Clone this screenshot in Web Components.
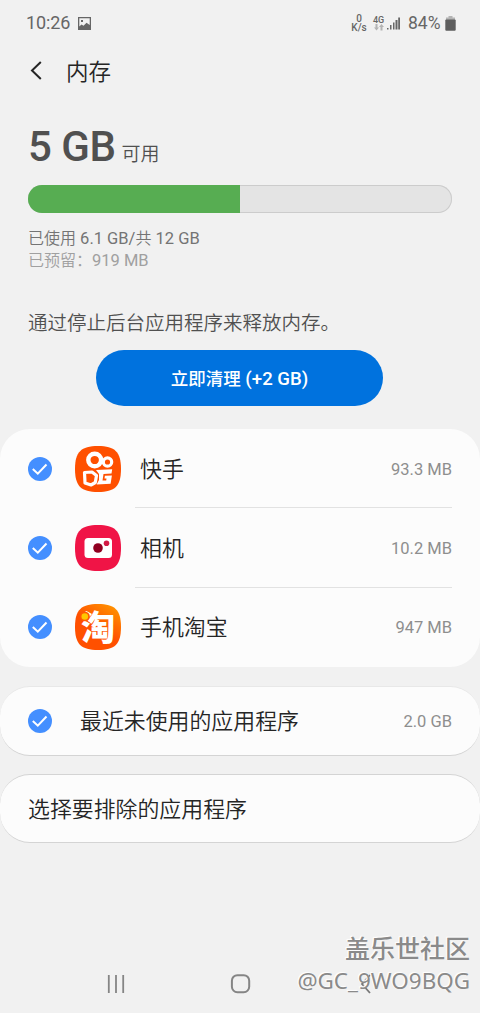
<!DOCTYPE html>
<html lang="zh-CN">
<head>
<meta charset="utf-8">
<meta name="viewport" content="width=device-width">
<title>内存</title>
<style>
html,body{margin:0;height:100%;background:#f1f1f1}
body{font-family:Roboto,"Noto Sans CJK SC",sans-serif;color:#252525;overflow:hidden}
</style>
</head>
<body>
<memory-screen></memory-screen>
<script>
const define = (name, html) => {
  const t = document.createElement('template');
  t.innerHTML = html;
  customElements.define(name, class extends HTMLElement {
    constructor(){ super(); this.attachShadow({mode:'open'}).append(t.content.cloneNode(true)); }
  });
};

define('status-bar', `<style>
:host{display:flex;height:46px;box-sizing:border-box;padding:0 24px 0 26px;align-items:center;color:#666;font-size:18px;line-height:20px}
.time{letter-spacing:-.1px}
.pic{margin-left:8px}
.speed{margin-left:auto;width:16px;font-size:10px;line-height:9px;font-weight:500;text-align:center;white-space:nowrap}
.net{margin-left:6px;margin-right:1px;width:12px;font-size:9px;line-height:8px;font-weight:500}
.net svg{display:block;margin-left:1px}
.sig{margin:1px 8px 0 1px}
.pct{width:32px;white-space:nowrap;font-size:17.5px}
.bat{margin-left:5px}
svg{display:block;flex:none}
</style>
<span class="time">10:26</span>
<svg class="pic" width="13" height="13" viewBox="0 0 13 13"><path fill="#666" fill-rule="evenodd" d="M0 0h13v13H0zM1.300 1.300v8.200L3.500 7.500l2 1.200 3-3 3.200 2.300V1.300zM3 3h2v2H3z"/></svg>
<div class="speed">0<br>K/s</div>
<div class="net">4G<svg width="10" height="7" viewBox="0 0 10 7"><path fill="#b4b4b4" d="M1.500 0h2v3.500H5L2.500 6.500 0 3.500h1.500zM6.500 6.500h2V3H10L7.500 0 5 3h1.500z"/></svg></div>
<svg class="sig" width="13" height="13" viewBox="0 0 13 13"><path fill="#666" d="M0 11h1.500v1.500H0zM3 8h1.500v4.500H3zM6 5.500h1.500v7H6zM8.500 3h2v9.500h-2zM11.200 0.500H13v12h-1.800z"/></svg>
<span class="pct">84%</span>
<svg class="bat" width="11" height="15" viewBox="0 0 11 15"><path fill="#b4b4b4" d="M3.500 0h4v1.500H10V4H1V1.500h2.500z"/><rect y="3.500" x=".3" width="10.400" height="11.200" rx="1" fill="#5e5e5e"/></svg>`);

define('title-bar', `<style>
:host{display:flex;height:52px;padding-left:30px;align-items:center}
svg{display:block;margin-top:-3px}
h1{margin:0 0 0 24px;font-weight:350;font-size:22.500px;line-height:30px}
</style>
<svg width="12" height="19" viewBox="0 0 12 19"><path d="M10.800 1 2 9.500l8.800 8.500" fill="none" stroke="#252525" stroke-width="2"/></svg>
<h1><slot></slot></h1>`);

define('memory-summary', `<style>
:host{display:flex;flex-direction:column;height:204px;padding:23px 28px 0;box-sizing:border-box}
.big{display:flex;align-items:baseline;height:64px;line-height:52px;color:#505050}
b{font-size:42px;font-weight:500;letter-spacing:-.5px}
.big span{font-size:19px;font-weight:350;margin-left:6px}
.bar{display:flex;height:28px;box-sizing:border-box;border-radius:14px;background:#e4e4e4;box-shadow:inset 0 0 0 1px #ccc;overflow:hidden}
.bar i{width:50%;background:#57ad52}
p{margin:0;font-size:16px;line-height:22px;color:#747474;white-space:nowrap}
p span{font-size:16.500px}
em{font-style:normal;font-weight:350}
.used{margin-top:15px}
.kept{color:#a0a0a0}
</style>
<div class="big"><b>5 GB</b><span>可用</span></div>
<div class="bar"><i></i></div>
<p class="used"><em>已使用</em><span> 6.1 GB/</span><em>共</em><span> 12 GB</span></p>
<p class="kept"><em>已预留：</em><span>919 MB</span></p>`);

define('clean-panel', `<style>
:host{display:flex;flex-direction:column;height:127px;padding-top:8px;box-sizing:border-box}
p{margin:0 28px;font-size:19.500px;font-weight:350;line-height:28px;color:#505050;white-space:nowrap}
button{display:block;margin:12px 0 0 96px;width:287px;height:56px;border:0;border-radius:28px;background:#0072de;color:#fff;font:500 17.500px/24px Roboto,"Noto Sans CJK SC",sans-serif;padding:1px 0 0}
button span{font-size:18.600px}
</style>
<p>通过停止后台应用程序来释放内存。</p>
<button>立即清理<span> (+2 GB)</span></button>`);

define('round-card', `<style>
:host{display:block;box-sizing:border-box;background:#fcfcfc;border-radius:30px;padding:0 28px}
:host([edge]){border-top:1px solid #e8e8e8;border-bottom:1px solid #d4d4d4}
:host([edge=both]){border-top-color:#d4d4d4}
</style><slot></slot>`);

define('check-mark', `<style>:host{display:block;width:24px;height:24px;flex:none}svg{display:block}</style>
<svg width="24" height="24" viewBox="0 0 24 24"><circle cx="12" cy="12" r="12" fill="#448fff"/><path d="m4.800 12 5 4.700 8.700-9.200" fill="none" stroke="#fff" stroke-width="2"/></svg>`);

define('app-row', `<style>
:host{display:flex;height:79.300px;align-items:center}
slot[name=icon]{display:block}
.main{display:flex;flex:1;align-self:stretch;align-items:center;justify-content:space-between;margin-left:13px;padding:3px 0 0 5px;box-sizing:border-box;border-bottom:1px solid #e2e2e2}
:host([last]) .main{border-color:transparent}
.icon{margin-left:22px;width:48px;height:48px}
:host([plain]){height:100%}
:host([plain]) .icon{display:none}
:host([plain]) .main{margin-left:23px;padding-top:1px;border:0}
.name{font-size:21.900px;font-weight:350;line-height:30px;color:#252525}
.size{font-size:16.500px;line-height:22px;color:#8e8e8e}
</style>
<check-mark></check-mark><div class="icon"><slot name="icon"></slot></div>
<div class="main"><span class="name"><slot></slot></span><span class="size"><slot name="size"></slot></span></div>`);

const squircle = 'M24 1C41 1 47 7 47 24S41 47 24 47 1 41 1 24 7 1 24 1Z';
define('video-icon', `<style>:host,svg{display:block}</style>
<svg width="48" height="48" viewBox="0 0 48 48"><path d="${squircle}" fill="#ff5000"/>
<g fill="none" stroke="#fff"><ellipse cx="20.700" cy="15" rx="6.400" ry="6.300" stroke-width="4.400"/><ellipse cx="33.500" cy="17" rx="4.200" ry="4.200" stroke-width="3.200"/>
<path d="M10.500 27.500 18 27l4.500 3.500-1.200 7L17 40l-6-2Z" stroke-width="3.200" stroke-linejoin="round"/></g>
<path fill="#fff" d="m22 25 16.200-.8-.7 4.300-8 .5-1 6.500h3.700l.3-2h-2l.4-2.800 7-.3-1.300 8.400-14 .7 2.400-4.500v-6Z"/></svg>`);

define('camera-icon', `<style>:host,svg{display:block}</style>
<svg width="48" height="48" viewBox="0 0 48 48"><path d="${squircle}" fill="#f01446"/><rect x="10.500" y="14" width="27.500" height="20" rx="3.500" fill="#fff"/><circle cx="24" cy="24" r="4.800" fill="#900020"/><circle cx="32.500" cy="19.300" r="2.800" fill="#d21b45"/></svg>`);

define('taobao-icon', `<style>:host{display:grid;width:48px;height:48px;place-items:center}svg,span{grid-area:1/1}svg{display:block}
span{font:900 34px/46px "Noto Sans CJK SC",sans-serif;color:#fff;height:48px}.dot{z-index:1}</style>
<svg width="48" height="48" viewBox="0 0 48 48"><defs><linearGradient id="g" x1=".85" y1="0" x2=".3" y2=".8"><stop stop-color="#ff9600"/><stop offset=".65" stop-color="#ff5000"/></linearGradient></defs><path d="${squircle}" fill="url(#g)"/></svg>
<span>淘</span>
<svg class="dot" width="48" height="48" viewBox="0 0 48 48"><circle cx="11" cy="13.500" r="4.800" fill="#ff5c00"/><circle cx="10.800" cy="13.500" r="3.300" fill="#ffc800"/></svg>`);

define('nav-bar', `<style>
:host{display:flex;height:58px;align-items:center;padding-left:107px;box-sizing:border-box}
svg{display:block}.home{margin-left:105px}.back{margin-left:109px}
</style>
<svg width="18" height="18" viewBox="0 0 18 18"><path d="M1.800 0v18M9 0v18M16.200 0v18" stroke="#858585" stroke-width="1.800"/></svg>
<svg class="home" width="21" height="20" viewBox="0 0 21 20"><rect x="1.900" y="1.200" width="17.300" height="17" rx="5.500" fill="none" stroke="#858585" stroke-width="2"/></svg>
<svg class="back" width="12" height="20" viewBox="0 0 12 20"><path d="M10 1 2 10l8 9" fill="none" stroke="#777" stroke-width="1.800"/></svg>`);

define('water-mark', `<style>
:host{position:absolute;right:10px;top:929px;display:flex;flex-direction:column;align-items:flex-end;color:#8a8a8a;white-space:nowrap;text-shadow:-1px -1px 1px #fff,-1px 0 0 #fafafa}
.a{font:500 25px/36px "Noto Sans CJK SC",sans-serif}
.b{font:400 22.400px/32px "Noto Sans","Noto Sans CJK SC",sans-serif}
</style><span class="a">盖乐世社区</span><span class="b">@GC_9WO9BQG</span>`);

define('memory-screen', `<style>
:host{position:relative;display:flex;flex-direction:column;width:480px;height:1013px;overflow:hidden;background:#f1f1f1}
.apps{height:238px}
.unused{height:70px;margin-top:19px}
.exclude{height:69px;margin-top:18px;display:flex;align-items:center;padding-top:3px;font-size:21.900px;font-weight:350;line-height:30px}
nav-bar{margin-top:auto}
</style>
<status-bar></status-bar>
<title-bar>内存</title-bar>
<memory-summary></memory-summary>
<clean-panel></clean-panel>
<round-card class="apps">
<app-row><video-icon slot="icon"></video-icon>快手<span slot="size">93.3 MB</span></app-row>
<app-row><camera-icon slot="icon"></camera-icon>相机<span slot="size">10.2 MB</span></app-row>
<app-row last><taobao-icon slot="icon"></taobao-icon>手机淘宝<span slot="size">947 MB</span></app-row>
</round-card>
<round-card class="unused" edge><app-row plain>最近未使用的应用程序<span slot="size">2.0 GB</span></app-row></round-card>
<round-card class="exclude" edge="both">选择要排除的应用程序</round-card>
<nav-bar></nav-bar>
<water-mark></water-mark>`);
</script>
</body>
</html>
